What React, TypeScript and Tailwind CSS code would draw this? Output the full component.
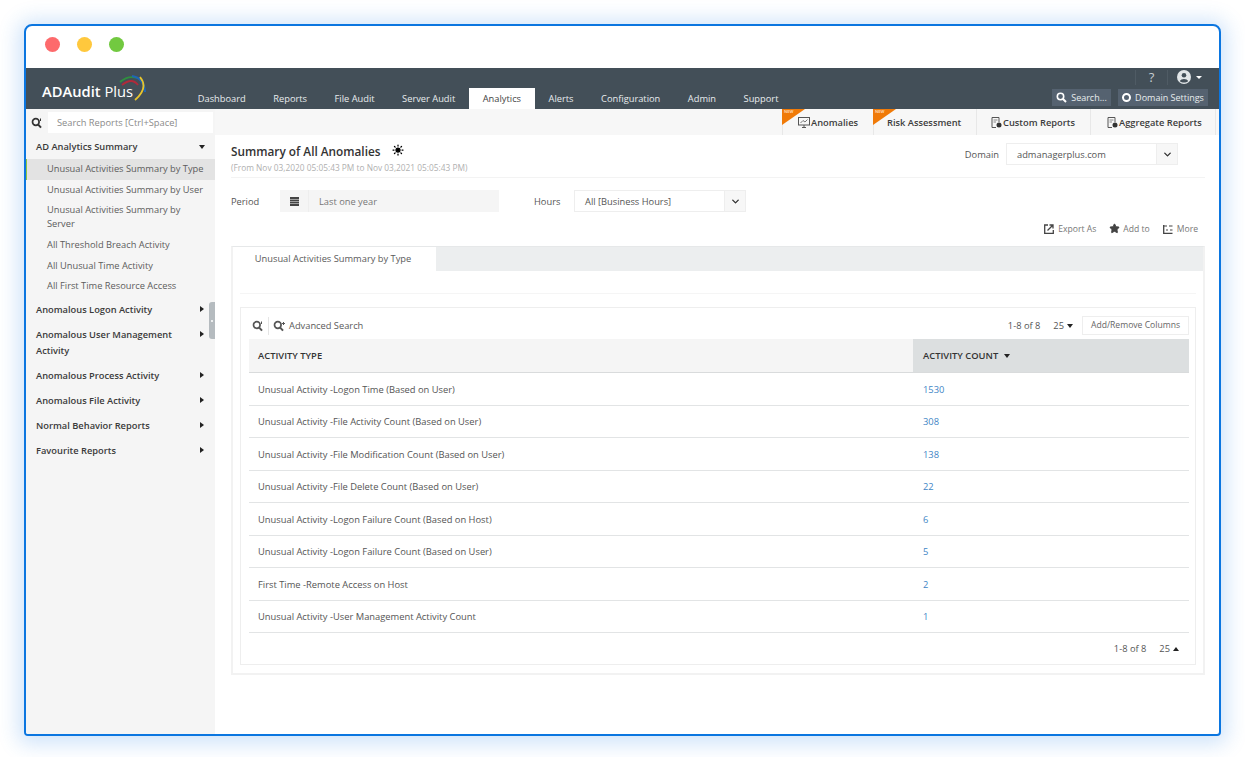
import { ChevronDown, Star, Sun } from "lucide-react";

const font = { fontFamily: '"Open Sans", sans-serif' };

const navItems = ["Dashboard", "Reports", "File Audit", "Server Audit", "Analytics", "Alerts", "Configuration", "Admin", "Support"];

const subReports = [
  { label: "Unusual Activities Summary by Type", active: true },
  { label: "Unusual Activities Summary by User" },
  { label: "Unusual Activities Summary by Server" },
  { label: "All Threshold Breach Activity" },
  { label: "All Unusual Time Activity" },
  { label: "All First Time Resource Access" },
];

const groups = [
  "Anomalous Logon Activity",
  "Anomalous User Management Activity",
  "Anomalous Process Activity",
  "Anomalous File Activity",
  "Normal Behavior Reports",
  "Favourite Reports",
];

const rows = [
  ["Unusual Activity -Logon Time (Based on User)", "1530"],
  ["Unusual Activity -File Activity Count (Based on User)", "308"],
  ["Unusual Activity -File Modification Count (Based on User)", "138"],
  ["Unusual Activity -File Delete Count (Based on User)", "22"],
  ["Unusual Activity -Logon Failure Count (Based on Host)", "6"],
  ["Unusual Activity -Logon Failure Count (Based on User)", "5"],
  ["First Time -Remote Access on Host", "2"],
  ["Unusual Activity -User Management Activity Count", "1"],
];

function Caret({ up = false }: { up?: boolean }) {
  return (
    <span
      className={`inline-block w-0 h-0 border-x-[3.5px] border-x-transparent ${
        up ? "border-b-[4px] border-b-[#222]" : "border-t-[4px] border-t-[#222]"
      }`}
    />
  );
}

function NewBadge() {
  return (
    <span className="absolute -left-px top-0 w-[23px] h-[16px] bg-[#f07a08] [clip-path:polygon(0_0,100%_0,0_100%)]">
      <span className="absolute left-[2px] top-0 text-[4px] leading-[6px] font-bold text-[#ffd9b0]">NEW</span>
    </span>
  );
}

// magnifier with the small tick / plus the app puts next to it
function SearchIcon({ color = "#333", plus = false }: { color?: string; plus?: boolean }) {
  return (
    <svg width="12" height="12" viewBox="0 0 12 12" fill="none">
      <circle cx="4.8" cy="5" r="3.3" stroke={color} strokeWidth="1.7" />
      <path d="M7.2 7.6 L10 10.6" stroke={color} strokeWidth="2" />
      {plus ? (
        <path d="M9 3.5 H12 M10.5 2 V5" stroke={color} strokeWidth="1" />
      ) : (
        <path d="M9.5 1.5 V4" stroke={color} strokeWidth="1" />
      )}
    </svg>
  );
}

function ReportIcon() {
  return (
    <svg width="11" height="11" viewBox="0 0 11 11" fill="none">
      <path d="M1 .5 H8 V5 M1 .5 V10.5 H5" stroke="#555" />
      <path d="M2.5 3 H6.5 M2.5 5 H5" stroke="#888" />
      <circle cx="8" cy="8" r="2.5" fill="#333" />
    </svg>
  );
}

function MonitorIcon() {
  return (
    <svg width="12" height="11" viewBox="0 0 12 11" fill="none">
      <rect x=".5" y=".5" width="11" height="7.5" stroke="#555" />
      <path d="M2.5 6 L5 3.5 L7 5 L9.5 2.5" stroke="#777" />
      <path d="M4 10.5 H8 M6 8 V10.5" stroke="#555" />
    </svg>
  );
}

export default function App() {
  return (
    <div style={font} className="w-[1245px] h-[757px] bg-white pt-6 pl-6 overflow-hidden">
      <div className="w-[1197px] h-[712px] flex flex-col border-2 border-[#0b76e0] rounded-t-lg rounded-b-[4px] bg-white shadow-[0_2px_20px_6px_rgba(40,130,230,0.22)] overflow-hidden">
        {/* title bar */}
        <div className="h-[42px] shrink-0 flex items-center gap-[17px] pl-[19px] pb-[6px]">
          <span className="w-[15px] h-[15px] rounded-full bg-[#fd6a6c]" />
          <span className="w-[15px] h-[15px] rounded-full bg-[#ffc83d]" />
          <span className="w-[15px] h-[15px] rounded-full bg-[#72c940]" />
        </div>

        {/* header */}
        <div className="h-[41px] shrink-0 bg-[#434f58] flex relative">
          <div className="w-[158px] shrink-0 pl-[16px] pt-[11px] relative">
            <span className="text-[14.7px] leading-[25px] font-semibold text-white whitespace-nowrap">ADAudit <span className="font-normal">Plus</span></span>
            <svg className="absolute left-[92px] top-[6px]" width="32" height="28" viewBox="0 0 32 28" fill="none">
              <path d="M2 8 Q10 1 19 4" stroke="#2f8f3f" strokeWidth="1.8" />
              <path d="M4 11 Q14 3 20 11" stroke="#b02a3a" strokeWidth="1.8" />
              <path d="M14 2 Q26 4 27 18" stroke="#1f66b5" strokeWidth="2.2" />
              <path d="M22 3 Q31 14 17 26" stroke="#e8c52c" strokeWidth="1.8" />
            </svg>
          </div>
          <div className="flex items-end">
            {navItems.map((item) => (
              <div
                key={item}
                className={`h-[21px] px-[13.75px] flex items-center text-[9.3px] whitespace-nowrap ${
                  item === "Analytics" ? "bg-white text-[#444]" : "text-[#e8ecee]"
                }`}
              >
                {item}
              </div>
            ))}
          </div>
          <div className="ml-auto pr-[11px] flex flex-col items-end">
            <div className="h-[21px] flex items-center pb-[3px] text-[#c7ced2] text-[13px]">
              <span className="w-[33px] text-center border-x border-[#4f5b64] leading-[15px]">?</span>
              <svg className="ml-[9px]" width="14" height="14" viewBox="0 0 14 14">
                <circle cx="7" cy="7" r="7" fill="#e2e6e8" />
                <circle cx="7" cy="5.2" r="2.3" fill="#434f58" />
                <path d="M2.8 11.2 C4 8.4 10 8.4 11.2 11.2 C9 13 5 13 2.8 11.2 Z" fill="#434f58" />
              </svg>
              <span className="ml-[5px] mr-[6px] w-0 h-0 border-x-[3px] border-x-transparent border-t-[3px] border-t-white" />
            </div>
            <div className="flex gap-[7px]">
              <div className="h-[17px] w-[59px] bg-[#556270] flex items-center justify-center gap-[4px] text-[9px] text-[#e8ecee]">
                <svg width="11" height="11" viewBox="0 0 11 11" fill="none">
                  <circle cx="4.5" cy="4.5" r="3.2" stroke="#fff" strokeWidth="1.6" />
                  <path d="M7 7 L10 10" stroke="#fff" strokeWidth="2" />
                </svg>
                Search...
              </div>
              <div className="h-[17px] w-[90px] bg-[#556270] flex items-center justify-center gap-[4px] text-[9px] text-[#e8ecee] whitespace-nowrap">
                <span className="w-[9px] h-[9px] rounded-full border-2 border-white" />
                Domain Settings
              </div>
            </div>
          </div>
        </div>

        <div className="flex flex-1 min-h-0">
          {/* sidebar */}
          <div className="w-[189px] shrink-0 bg-[#f5f5f5] flex flex-col relative">
            <div className="h-[26px] flex items-end pb-[2px]">
              <div className="w-[22px] h-[21px] flex items-center justify-center">
                <SearchIcon />
              </div>
              <div className="w-[165px] h-[21px] bg-white pl-[9px] flex items-center text-[9.3px] text-[#8a8a8a]">Search Reports [Ctrl+Space]</div>
            </div>
            <div className="h-[23px] flex items-center justify-between pl-[10px] pr-[10px] text-[9.3px] font-semibold text-[#3a3a3a]">
              AD Analytics Summary
              <Caret />
            </div>
            <div className="flex flex-col pt-[1px]">
              {subReports.map((r) => (
                <div
                  key={r.label}
                  className={`pr-[8px] text-[9.3px] leading-[14px] text-[#5c5c5c] py-[3.3px] ${
                    r.active ? "bg-[#e3e3e3] border-l border-[#8cc63f] pl-[20px]" : "pl-[21px]"
                  }`}
                >
                  {r.label}
                </div>
              ))}
            </div>
            <div className="flex flex-col pt-[1px]">
              {groups.map((g) => (
                <div key={g} className="flex items-start justify-between pl-[10px] pr-[11px] py-[4.5px] text-[9.3px] leading-[16px] font-semibold text-[#3a3a3a]">
                  <span className="w-[145px]">{g}</span>
                  <span className="mt-[4px] w-0 h-0 border-y-[3.5px] border-y-transparent border-l-[4px] border-l-[#222]" />
                </div>
              ))}
            </div>
            <div className="absolute right-0 top-[193px] w-[6px] h-[37px] bg-[#b5bbbf] rounded-l-[3px] flex items-center justify-center">
              <span className="w-[2px] h-[2px] bg-white rounded-full" />
            </div>
          </div>

          {/* content */}
          <div className="flex-1 min-w-0 flex flex-col">
            <div className="h-[26px] shrink-0 bg-[#f7f7f7] flex justify-end pr-[3px] text-[9.3px] font-semibold text-[#3d3d3d]">
              <div className="relative w-[91px] border-l border-[#e8e8e8] flex items-center pt-[1px] pl-[15px] gap-[1px]">
                <NewBadge />
                <MonitorIcon />
                Anomalies
              </div>
              <div className="relative w-[103px] border-l border-[#e8e8e8] flex items-center pt-[1px] pl-[13px]">
                <NewBadge />
                Risk Assessment
              </div>
              <div className="w-[114px] border-l border-[#e8e8e8] flex items-center pt-[1px] pl-[14px] gap-[1px]">
                <ReportIcon />
                Custom Reports
              </div>
              <div className="w-[126px] border-x border-[#e8e8e8] flex items-center pt-[1px] pl-[16px] gap-[1px] whitespace-nowrap">
                <ReportIcon />
                Aggregate Reports
              </div>
            </div>

            <div className="pl-[16px] pr-[14px] flex-1 flex flex-col">
              <div className="h-[43px] shrink-0 border-b border-[#f3f3f3] flex justify-between">
                <div>
                  <div className="flex items-center gap-[11px] pt-[8px] text-[11.8px] leading-[17px] font-semibold text-[#333]">
                    Summary of All Anomalies
                    <Sun className="w-[12px] h-[12px] text-black -mt-[4px]" fill="black" strokeWidth={2.5} />
                  </div>
                  <div className="mt-[1px] text-[8.35px] leading-[13px] text-[#b0b0b0]">(From Nov 03,2020 05:05:43 PM to Nov 03,2021 05:05:43 PM)</div>
                </div>
                <div className="flex items-start pt-[8px] pr-[27px]">
                  <span className="text-[9.3px] pt-[1px] leading-[22px] text-[#555] mr-[7px]">Domain</span>
                  <div className="w-[172px] h-[22px] border border-[#eeeeee] flex items-center">
                    <span className="flex-1 pl-[10px] pt-[1px] text-[9.3px] text-[#555]">admanagerplus.com</span>
                    <span className="w-[21px] h-full bg-[#f7f7f7] border-l border-[#eeeeee] flex items-center justify-center">
                      <ChevronDown className="w-[11px] h-[11px] text-[#333]" strokeWidth={3} />
                    </span>
                  </div>
                </div>
              </div>

              <div className="flex items-center h-[22px] mt-[12px] shrink-0 text-[9.3px] text-[#555]">
                <span className="w-[49px] pt-[1px]">Period</span>
                <div className="w-[219px] h-full bg-[#f5f5f5] flex items-center">
                  <span className="w-[29px] h-full border-r border-[#eeeeee] flex items-center justify-center">
                    <svg width="9" height="10" viewBox="0 0 9 10">
                      <path d="M0 1 H9 V10 H0 Z" fill="#444" />
                      <path d="M0 3.5 H9 M0 5.5 H9 M0 7.5 H9" stroke="#ddd" strokeWidth=".6" />
                    </svg>
                  </span>
                  <span className="pl-[10px] pt-[1px] text-[#777]">Last one year</span>
                </div>
                <span className="ml-[35px] w-[40px] pt-[1px]">Hours</span>
                <div className="w-[172px] h-full border border-[#eeeeee] flex items-center">
                  <span className="flex-1 pl-[10px] pt-[1px]">All [Business Hours]</span>
                  <span className="w-[21px] h-full bg-[#f7f7f7] border-l border-[#eeeeee] flex items-center justify-center">
                    <ChevronDown className="w-[11px] h-[11px] text-[#333]" strokeWidth={3} />
                  </span>
                </div>
              </div>

              <div className="h-[16px] mt-[9px] shrink-0 flex items-center justify-end gap-[13px] pr-[7px] text-[8.6px] text-[#777]">
                <span className="flex items-center gap-[4px]">
                  <svg width="10" height="10" viewBox="0 0 10 10" fill="none">
                    <path d="M4 1 H.7 V9.3 H9.3 V6" stroke="#444" strokeWidth="1.3" />
                    <path d="M3.5 6.5 L8.5 1.5 M5.5 1 H9 V4.5" stroke="#444" strokeWidth="1.3" />
                  </svg>
                  Export As
                </span>
                <span className="flex items-center gap-[3px]">
                  <Star className="w-[11px] h-[11px] text-[#444]" fill="#444" />
                  Add to
                </span>
                <span className="flex items-center gap-[4px]">
                  <svg width="10" height="10" viewBox="0 0 10 10" fill="none">
                    <path d="M.7 1 V9.3 H9.5" stroke="#444" strokeWidth="1.3" />
                    <path d="M.7 2 H4 M6 2 H9.5 M3 6 H5 M7 6 H9.5" stroke="#444" strokeWidth="1.2" />
                  </svg>
                  More
                </span>
              </div>

              {/* report box */}
              <div className="mt-[9px] h-[429px] shrink-0 border-2 border-[#f2f2f2] border-t-[#e6e8e9] border-t flex flex-col">
                <div className="h-[24px] shrink-0 bg-[#eceeef] flex">
                  <div className="w-[203px] pr-[3px] bg-white flex items-center justify-center text-[9.3px] text-[#5a5a5a]">Unusual Activities Summary by Type</div>
                </div>
                <div className="mx-[7px] mt-[22px] h-0 shrink-0 border-t border-[#f5f5f5]" />
                <div className="mx-[7px] mt-[13px] h-[358px] border border-[#eeeeee] pl-[8px] pr-[6px] flex flex-col">
                  <div className="h-[31px] shrink-0 flex items-center pt-[5px] text-[9.3px] text-[#5a5a5a]">
                    <span className="w-[20px] h-[18px] border-r border-[#e5e5e5] flex items-center pl-[3px]">
                      <SearchIcon color="#555" />
                    </span>
                    <span className="ml-[4px] flex"><SearchIcon color="#555" plus /></span>
                    <span className="ml-[4px]">Advanced Search</span>
                    <span className="ml-auto text-[#555]">1-8 of 8</span>
                    <span className="ml-[13px] mr-[3px] text-[#555]">25</span>
                    <Caret />
                    <span className="ml-[9px] w-[107px] h-[19px] -mt-[1px] border border-[#eeeeee] flex items-center justify-center text-[8.6px] text-[#666]">Add/Remove Columns</span>
                  </div>
                  <div className="flex h-[34px] shrink-0 border-b border-[#d9dbdc] text-[9.4px] font-semibold text-[#333]">
                    <div className="w-[664px] bg-[#f5f5f5] flex items-center pt-[1px] pl-[9px]">ACTIVITY TYPE</div>
                    <div className="flex-1 bg-[#dcdfe0] flex items-center pt-[1px] gap-[6px] pl-[10px]">
                      ACTIVITY COUNT
                      <Caret />
                    </div>
                  </div>
                  {rows.map(([name, count]) => (
                    <div key={name} className="flex h-[32.5px] shrink-0 border-b border-[#e2e4e5] text-[9.35px] items-center pt-[2px]">
                      <div className="w-[664px] pl-[9px] text-[#555]">{name}</div>
                      <div className="pl-[10px] text-[#3f86c6]">{count}</div>
                    </div>
                  ))}
                  <div className="flex items-center justify-end h-[30px] pt-[1px] pr-[10px] text-[9.3px] text-[#555]">
                    1-8 of 8
                    <span className="ml-[13px] mr-[3px]">25</span>
                    <Caret up />
                  </div>
                </div>
              </div>
            </div>
          </div>
        </div>
      </div>
    </div>
  );
}
